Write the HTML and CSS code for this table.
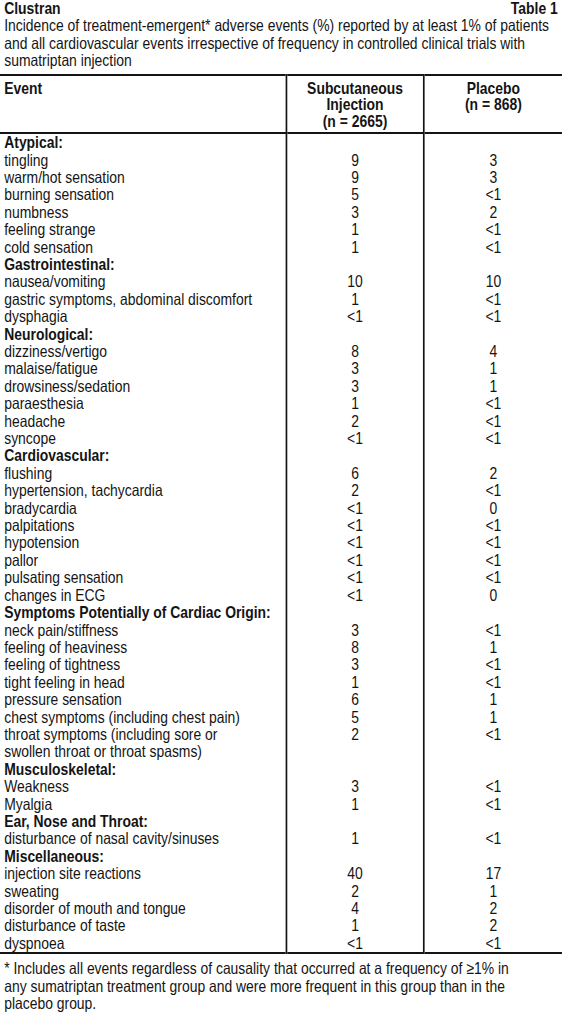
FILE: index.html
```html
<!DOCTYPE html>
<html lang="en">
<head>
    <meta charset="UTF-8">
    <title>Clustran Table 1</title>
    <link rel="stylesheet" href="styles.css">
</head>
<body>
  <div class="page">
    <!-- Title -->
    <div class="caption">
        <div class="caption__top">
            <span class="caption__name">Clustran</span>
            <span class="caption__num">Table 1</span>
        </div>
        <p class="caption__text">Incidence of treatment-emergent* adverse events (%) reported by at least 1% of patients and all cardiovascular events irrespective of frequency in controlled clinical trials with sumatriptan injection</p>
    </div>

    <!-- Table -->
    <table class="events">
        <thead>
            <tr>
                <th class="col-event">Event</th>
                <th class="col-num">Subcutaneous<br>Injection<br>(n = 2665)</th>
                <th class="col-num">Placebo<br>(n = 868)</th>
            </tr>
        </thead>
        <tbody>
            <tr class="group"><td>Atypical:</td><td></td><td></td></tr>
            <tr><td>tingling</td><td>9</td><td>3</td></tr>
            <tr><td>warm/hot sensation</td><td>9</td><td>3</td></tr>
            <tr><td>burning sensation</td><td>5</td><td>&lt;1</td></tr>
            <tr><td>numbness</td><td>3</td><td>2</td></tr>
            <tr><td>feeling strange</td><td>1</td><td>&lt;1</td></tr>
            <tr><td>cold sensation</td><td>1</td><td>&lt;1</td></tr>

            <tr class="group"><td>Gastrointestinal:</td><td></td><td></td></tr>
            <tr><td>nausea/vomiting</td><td>10</td><td>10</td></tr>
            <tr><td>gastric symptoms, abdominal discomfort</td><td>1</td><td>&lt;1</td></tr>
            <tr><td>dysphagia</td><td>&lt;1</td><td>&lt;1</td></tr>

            <tr class="group"><td>Neurological:</td><td></td><td></td></tr>
            <tr><td>dizziness/vertigo</td><td>8</td><td>4</td></tr>
            <tr><td>malaise/fatigue</td><td>3</td><td>1</td></tr>
            <tr><td>drowsiness/sedation</td><td>3</td><td>1</td></tr>
            <tr><td>paraesthesia</td><td>1</td><td>&lt;1</td></tr>
            <tr><td>headache</td><td>2</td><td>&lt;1</td></tr>
            <tr><td>syncope</td><td>&lt;1</td><td>&lt;1</td></tr>

            <tr class="group"><td>Cardiovascular:</td><td></td><td></td></tr>
            <tr><td>flushing</td><td>6</td><td>2</td></tr>
            <tr><td>hypertension, tachycardia</td><td>2</td><td>&lt;1</td></tr>
            <tr><td>bradycardia</td><td>&lt;1</td><td>0</td></tr>
            <tr><td>palpitations</td><td>&lt;1</td><td>&lt;1</td></tr>
            <tr><td>hypotension</td><td>&lt;1</td><td>&lt;1</td></tr>
            <tr><td>pallor</td><td>&lt;1</td><td>&lt;1</td></tr>
            <tr><td>pulsating sensation</td><td>&lt;1</td><td>&lt;1</td></tr>
            <tr><td>changes in ECG</td><td>&lt;1</td><td>0</td></tr>

            <tr class="group"><td>Symptoms Potentially of Cardiac Origin:</td><td></td><td></td></tr>
            <tr><td>neck pain/stiffness</td><td>3</td><td>&lt;1</td></tr>
            <tr><td>feeling of heaviness</td><td>8</td><td>1</td></tr>
            <tr><td>feeling of tightness</td><td>3</td><td>&lt;1</td></tr>
            <tr><td>tight feeling in head</td><td>1</td><td>&lt;1</td></tr>
            <tr><td>pressure sensation</td><td>6</td><td>1</td></tr>
            <tr><td>chest symptoms (including chest pain)</td><td>5</td><td>1</td></tr>
            <tr><td>throat symptoms (including sore or<br>swollen throat or throat spasms)</td><td>2</td><td>&lt;1</td></tr>

            <tr class="group"><td>Musculoskeletal:</td><td></td><td></td></tr>
            <tr><td>Weakness</td><td>3</td><td>&lt;1</td></tr>
            <tr><td>Myalgia</td><td>1</td><td>&lt;1</td></tr>

            <tr class="group"><td>Ear, Nose and Throat:</td><td></td><td></td></tr>
            <tr><td>disturbance of nasal cavity/sinuses</td><td>1</td><td>&lt;1</td></tr>

            <tr class="group"><td>Miscellaneous:</td><td></td><td></td></tr>
            <tr><td>injection site reactions</td><td>40</td><td>17</td></tr>
            <tr><td>sweating</td><td>2</td><td>1</td></tr>
            <tr><td>disorder of mouth and tongue</td><td>4</td><td>2</td></tr>
            <tr><td>disturbance of taste</td><td>1</td><td>2</td></tr>
            <tr><td>dyspnoea</td><td>&lt;1</td><td>&lt;1</td></tr>
        </tbody>
    </table>

    <!-- Footnote -->
    <p class="footnote">* Includes all events regardless of causality that occurred at a frequency of &ge;1% in any sumatriptan treatment group and were more frequent in this group than in the placebo group.</p>
  </div>
</body>
</html>
```

FILE: styles.css
```css
* {
    box-sizing: border-box;
    margin: 0;
    padding: 0;
}

html,
body {
    width: 562px;
    overflow: hidden;
    background: #fff;
}

/* condensed look: Arial-width font squeezed to narrow proportions */
.page {
    width: 667px;
    margin-right: -105px;
    transform: scaleX(0.8425);
    transform-origin: 0 0;
    color: #141414;
    font-family: "Liberation Sans", Arial, sans-serif;
    font-size: 16.5px;
    line-height: 17.4px;
}

.caption {
    padding: 0 5px;
}

.caption__top {
    display: flex;
    justify-content: space-between;
    font-weight: bold;
}

.caption__text {
    padding-right: 4px;
}

.events {
    width: 100%;
    margin-top: 4px;
    border-collapse: collapse;
    border-top: 2px solid #141414;
    border-bottom: 2px solid #141414;
}

.events th {
    font-weight: bold;
    line-height: 16.5px;
    padding: 4px 5px 3px 5px;
    vertical-align: top;
    border-bottom: 2px solid #141414;
}

.events th.col-event {
    width: 338px;
    text-align: left;
}

.events th.col-num {
    width: 163px;
    text-align: center;
}

.events td {
    padding: 0 5px;
    vertical-align: top;
    text-align: center;
}

.events td:first-child {
    text-align: left;
}

.events th + th,
.events td + td {
    border-left: 2px solid #141414;
}

.events .group td {
    font-weight: bold;
}

.footnote {
    padding: 6px 36px 0 5px;
}
```
